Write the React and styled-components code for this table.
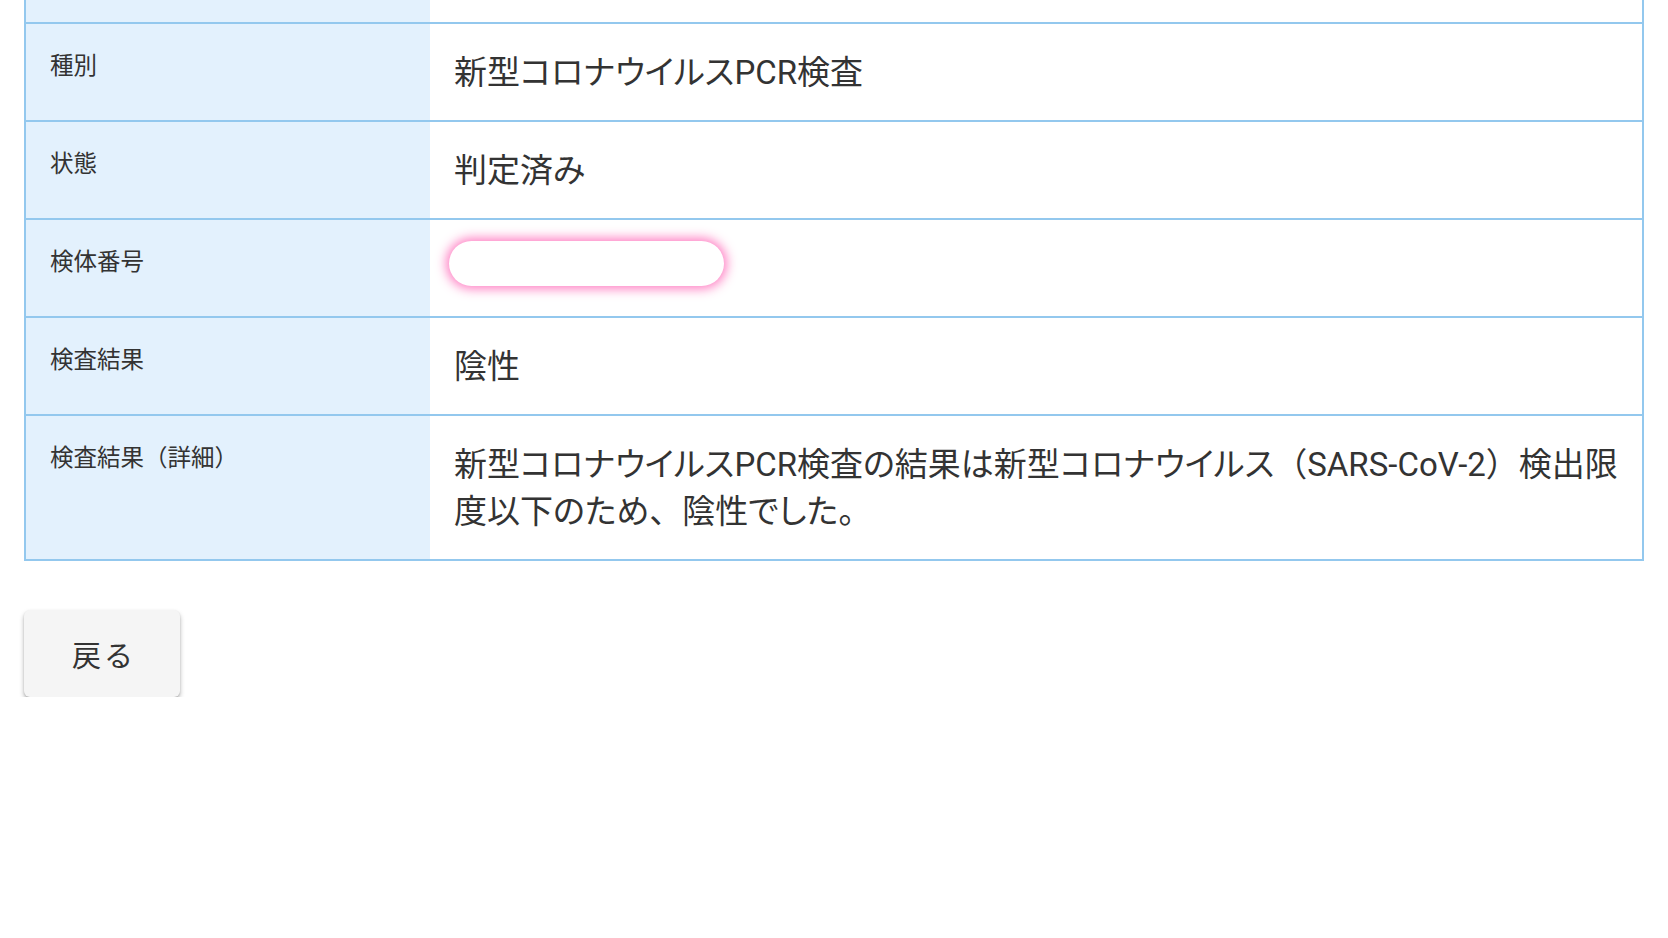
import React from "react";
import styled, { createGlobalStyle } from "styled-components";

const GlobalStyle = createGlobalStyle`
  body {
    margin: 0;
    background: #ffffff;
    font-family: Roboto, "Noto Sans CJK JP", sans-serif;
    color: #333333;
  }
`;

const Page = styled.div`
  padding: 0 24px;
`;

const DetailTable = styled.div`
  border-left: 2px solid #93c8ee;
  border-right: 2px solid #93c8ee;
  border-bottom: 2px solid #93c8ee;
`;

const Row = styled.div`
  display: grid;
  grid-template-columns: 404px 1fr;
  border-top: ${props => (props.first ? "none" : "2px solid #93c8ee")};
  min-height: ${props => (props.first ? "22px" : "0")};
`;

const Label = styled.div`
  background: #e3f1fd;
  padding: ${props => (props.empty ? "0" : "25px 24px 24px")};
  font-size: 23.5px;
  line-height: 34px;
  color: #333333;
`;

const Value = styled.div`
  padding: ${props => (props.empty ? "0" : "25px 12px 24px 24px")};
  font-size: 33px;
  line-height: 47px;
  font-feature-settings: "palt";
  color: #333333;
`;

// brackets and commas keep their full width, like the reference font
const FullWidth = styled.span`
  font-feature-settings: normal;
`;

const Redacted = styled.span`
  display: inline-block;
  vertical-align: top;
  width: 275px;
  height: 45px;
  margin: -4px 0 0 -5px;
  border-radius: 23px;
  background: #ffffff;
  box-shadow: 0 0 11px 3px rgba(255, 105, 185, 0.85);
`;

const Actions = styled.div`
  padding-top: 49px;
`;

const BackButton = styled.button`
  width: 156px;
  height: 87px;
  padding: 0 0 0 4px;
  border: none;
  border-radius: 6px;
  background: #f5f5f5;
  box-shadow: 0 3px 5px rgba(0, 0, 0, 0.28), 0 1px 2px rgba(0, 0, 0, 0.12);
  font-family: Roboto, "Noto Sans CJK JP", sans-serif;
  font-size: 29px;
  letter-spacing: 3px;
  color: #333333;
  cursor: pointer;
`;

const rows = [
  { label: "種別", value: "新型コロナウイルスPCR検査" },
  { label: "状態", value: "判定済み" },
  { label: "検体番号", redacted: true },
  { label: "検査結果", value: "陰性" },
  {
    label: "検査結果（詳細）",
    value: (
      <>
        新型コロナウイルスPCR検査の結果は新型コロナウイルス<FullWidth>（</FullWidth>SARS-CoV-2
        <FullWidth>）</FullWidth>検出限度以下のため<FullWidth>、</FullWidth>陰性でした。
      </>
    ),
  },
];

export default function App() {
  return (
    <>
      <GlobalStyle />
      <Page>
        <DetailTable>
          <Row first>
            <Label empty />
            <Value empty />
          </Row>
          {rows.map(row => (
            <Row key={row.label}>
              <Label>{row.label}</Label>
              <Value>{row.redacted ? <Redacted /> : row.value}</Value>
            </Row>
          ))}
        </DetailTable>
        <Actions>
          <BackButton>戻る</BackButton>
        </Actions>
      </Page>
    </>
  );
}
